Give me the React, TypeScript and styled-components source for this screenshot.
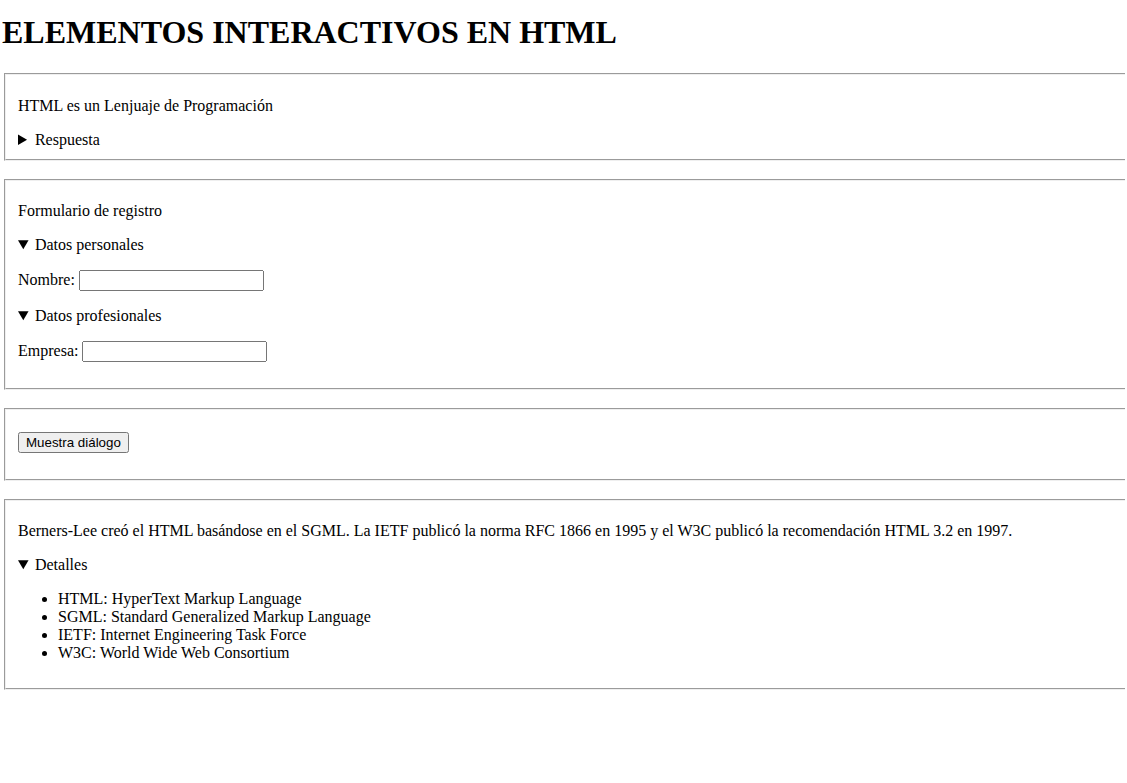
import { createGlobalStyle } from "styled-components";
import styled from "styled-components";

const GlobalStyle = createGlobalStyle`
  html {
    overflow-x: hidden;
  }
  body {
    margin: 0 2px;
    background: #ffffff;
    color: #000000;
    font-family: "Liberation Serif", "Times New Roman", serif;
    font-size: 16px;
  }
`;

const Title = styled.h1`
  font-size: 32px;
  font-weight: bold;
  margin: 14px 0 22px;
`;

const Panel = styled.fieldset`
  display: block;
  margin: 0 -30px 18px 2px;
  padding: 0.35em 0.75em 0.625em;
  border: 2px groove ThreeDFace;
`;

const Text = styled.p`
  margin: 16px 0;
`;

const Disclosure = styled.details`
  display: block;
`;

const Summary = styled.summary`
  display: list-item;
  cursor: pointer;
`;

const Field = styled.input`
  font-family: Arial, "Liberation Sans", sans-serif;
`;

const DialogButton = styled.button`
  font-family: Arial, "Liberation Sans", sans-serif;
`;

const Glossary = styled.ul`
  margin: 16px 0;
  padding-left: 40px;
`;

const terms = [
  "HTML: HyperText Markup Language",
  "SGML: Standard Generalized Markup Language",
  "IETF: Internet Engineering Task Force",
  "W3C: World Wide Web Consortium",
];

const App = () => {
  return (
    <>
      <GlobalStyle />
      <Title>ELEMENTOS INTERACTIVOS EN HTML</Title>

      <Panel>
        <Text>HTML es un Lenjuaje de Programación</Text>
        <Disclosure>
          <Summary>Respuesta</Summary>
          <Text>No, HTML es un lenguaje de marcado.</Text>
        </Disclosure>
      </Panel>

      <Panel>
        <Text>Formulario de registro</Text>
        <Disclosure open>
          <Summary>Datos personales</Summary>
          <Text>
            Nombre: <Field type="text" />
          </Text>
        </Disclosure>
        <Disclosure open>
          <Summary>Datos profesionales</Summary>
          <Text>
            Empresa: <Field type="text" />
          </Text>
        </Disclosure>
      </Panel>

      <Panel>
        <Text>
          <DialogButton type="button">Muestra diálogo</DialogButton>
        </Text>
      </Panel>

      <Panel>
        <Text>
          Berners-Lee creó el HTML basándose en el SGML. La IETF publicó la
          norma RFC 1866 en 1995 y el W3C publicó la recomendación HTML 3.2 en
          1997.
        </Text>
        <Disclosure open>
          <Summary>Detalles</Summary>
          <Glossary>
            {terms.map((term) => (
              <li key={term}>{term}</li>
            ))}
          </Glossary>
        </Disclosure>
      </Panel>
    </>
  );
};

export default App;
